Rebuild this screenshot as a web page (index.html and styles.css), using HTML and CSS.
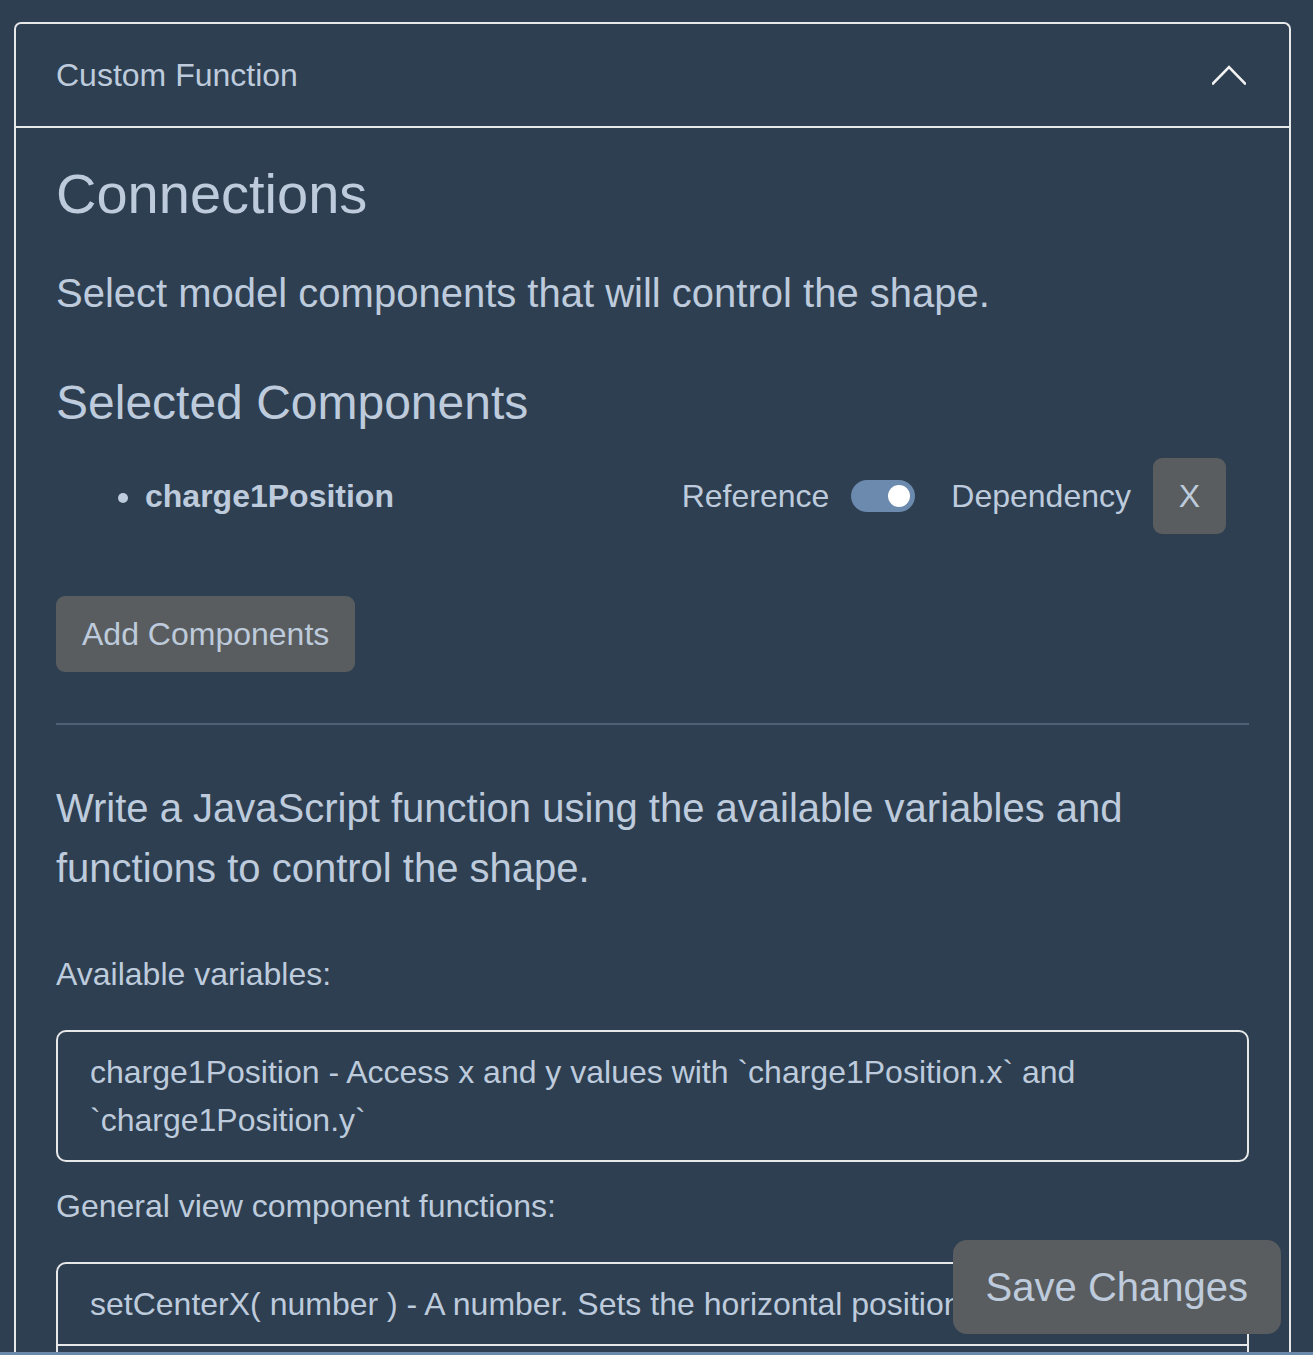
FILE: index.html
```html
<!DOCTYPE html>
<html lang="en">
<head>
<meta charset="utf-8">
<title>Custom Function</title>
<link rel="stylesheet" href="styles.css">
</head>
<body>
<div class="page">
  <section class="card">
    <header class="card-header">
      <span class="card-title">Custom Function</span>
      <svg class="chevron" width="34" height="20" viewBox="0 0 34 20" aria-hidden="true">
        <polyline points="1,18.5 17,2 33,18.5" fill="none" stroke="#f2f2f2" stroke-width="2.6" stroke-linecap="square"/>
      </svg>
    </header>
    <div class="card-body">
      <h2 class="title">Connections</h2>
      <p class="lead">Select model components that will control the shape.</p>
      <h3 class="subtitle">Selected Components</h3>
      <ul class="components">
        <li class="component">
          <span class="component-name"><span class="bullet"></span>charge1Position</span>
          <div class="component-controls">
            <span class="label">Reference</span>
            <span class="toggle"><span class="knob"></span></span>
            <span class="label">Dependency</span>
            <button class="btn btn-remove">X</button>
          </div>
        </li>
      </ul>
      <button class="btn btn-add">Add Components</button>
      <hr class="divider">
      <p class="lead intro">Write a JavaScript function using the available variables and functions to control the shape.</p>
      <p class="caption">Available variables:</p>
      <div class="code-box">
        <div class="code-item">charge1Position - Access x and y values with `charge1Position.x` and `charge1Position.y`</div>
      </div>
      <p class="caption caption-second">General view component functions:</p>
      <div class="code-box code-box-list">
        <div class="code-item divided nowrap">setCenterX( number ) - A number. Sets the horizontal position of the shape.</div>
      </div>
    </div>
  </section>
</div>
<button class="btn btn-save">Save Changes</button>
<div class="bottom-bar"></div>
</body>
</html>
```
FILE: styles.css
```css
html, body {
  margin: 0;
  padding: 0;
  background: #2e3f51;
}
body {
  font-family: "Liberation Sans", Arial, sans-serif;
  color: #bdcbdc;
  overflow: hidden;
  height: 1355px;
}
.page {
  padding: 22px 22px 0 14px;
}
.card {
  border: 2px solid #e6e8ea;
  border-bottom: none;
  border-radius: 7px 7px 0 0;
}
.card-header {
  display: flex;
  align-items: center;
  justify-content: space-between;
  height: 102px;
  padding: 0 43px 0 40px;
  border-bottom: 2px solid #e6e8ea;
}
.card-title {
  font-size: 32px;
  line-height: 48px;
  margin-top: -1px;
}
.chevron {
  display: block;
}
.card-body {
  padding: 32px 40px 0 40px;
}
.title {
  margin: 0;
  font-size: 56px;
  font-weight: normal;
  line-height: 67px;
}
.lead {
  margin: 36px 0 0 0;
  font-size: 40px;
  line-height: 60px;
}
.subtitle {
  margin: 51px 0 0 0;
  font-size: 48px;
  font-weight: normal;
  line-height: 58px;
}
.components {
  list-style: none;
  margin: 26px 0 0 0;
  padding: 0 23px 0 62px;
}
.component {
  display: flex;
  align-items: center;
  justify-content: space-between;
  font-size: 32px;
  line-height: 48px;
}
.component-name {
  display: flex;
  align-items: center;
  font-weight: bold;
  font-size: 32px;
}
.bullet {
  width: 10px;
  height: 10px;
  border-radius: 50%;
  background: #bdcbdc;
  margin: 4px 17px 0 0;
}
.component-controls {
  display: flex;
  align-items: center;
}
.label {
  font-size: 32px;
}
.toggle {
  display: flex;
  align-items: center;
  justify-content: flex-end;
  width: 64px;
  height: 32px;
  margin: 0 36px 0 22px;
  padding: 0 5px;
  box-sizing: border-box;
  border-radius: 16px;
  background: #6b8aad;
}
.knob {
  width: 22px;
  height: 22px;
  border-radius: 50%;
  background: #ffffff;
}
.btn {
  font-family: "Liberation Sans", Arial, sans-serif;
  color: #bdcbdc;
  background: #5a5d5f;
  border: none;
  border-radius: 9px;
  font-size: 32px;
  line-height: 48px;
}
.btn-remove {
  margin-left: 22px;
  width: 73px;
  height: 76px;
  padding: 0;
}
.btn-add {
  display: block;
  margin-top: 62px;
  height: 76px;
  padding: 0 26px;
}
.divider {
  margin: 51px 0 0 0;
  border: none;
  height: 2px;
  background: #4f6174;
}
.intro {
  margin-top: 53px;
}
.caption {
  margin: 52px 0 0 0;
  font-size: 32px;
  line-height: 48px;
}
.caption-second {
  margin-top: 20px;
}
.code-box {
  margin-top: 32px;
  border: 2px solid #e6e8ea;
  border-radius: 10px;
}
.code-box-list {
  padding-bottom: 40px;
}
.code-item {
  padding: 16px 32px;
  font-size: 32px;
  line-height: 48px;
}
.divided {
  border-bottom: 2px solid #e6e8ea;
}
.nowrap {
  white-space: nowrap;
  overflow: hidden;
}
.btn-save {
  position: fixed;
  right: 32px;
  bottom: 21px;
  height: 94px;
  padding: 0 33px;
  font-size: 40px;
  line-height: 60px;
  border-radius: 14px;
}
.bottom-bar {
  position: fixed;
  left: 0;
  right: 0;
  bottom: 0;
  height: 3px;
  background: #6a89ab;
}
```
